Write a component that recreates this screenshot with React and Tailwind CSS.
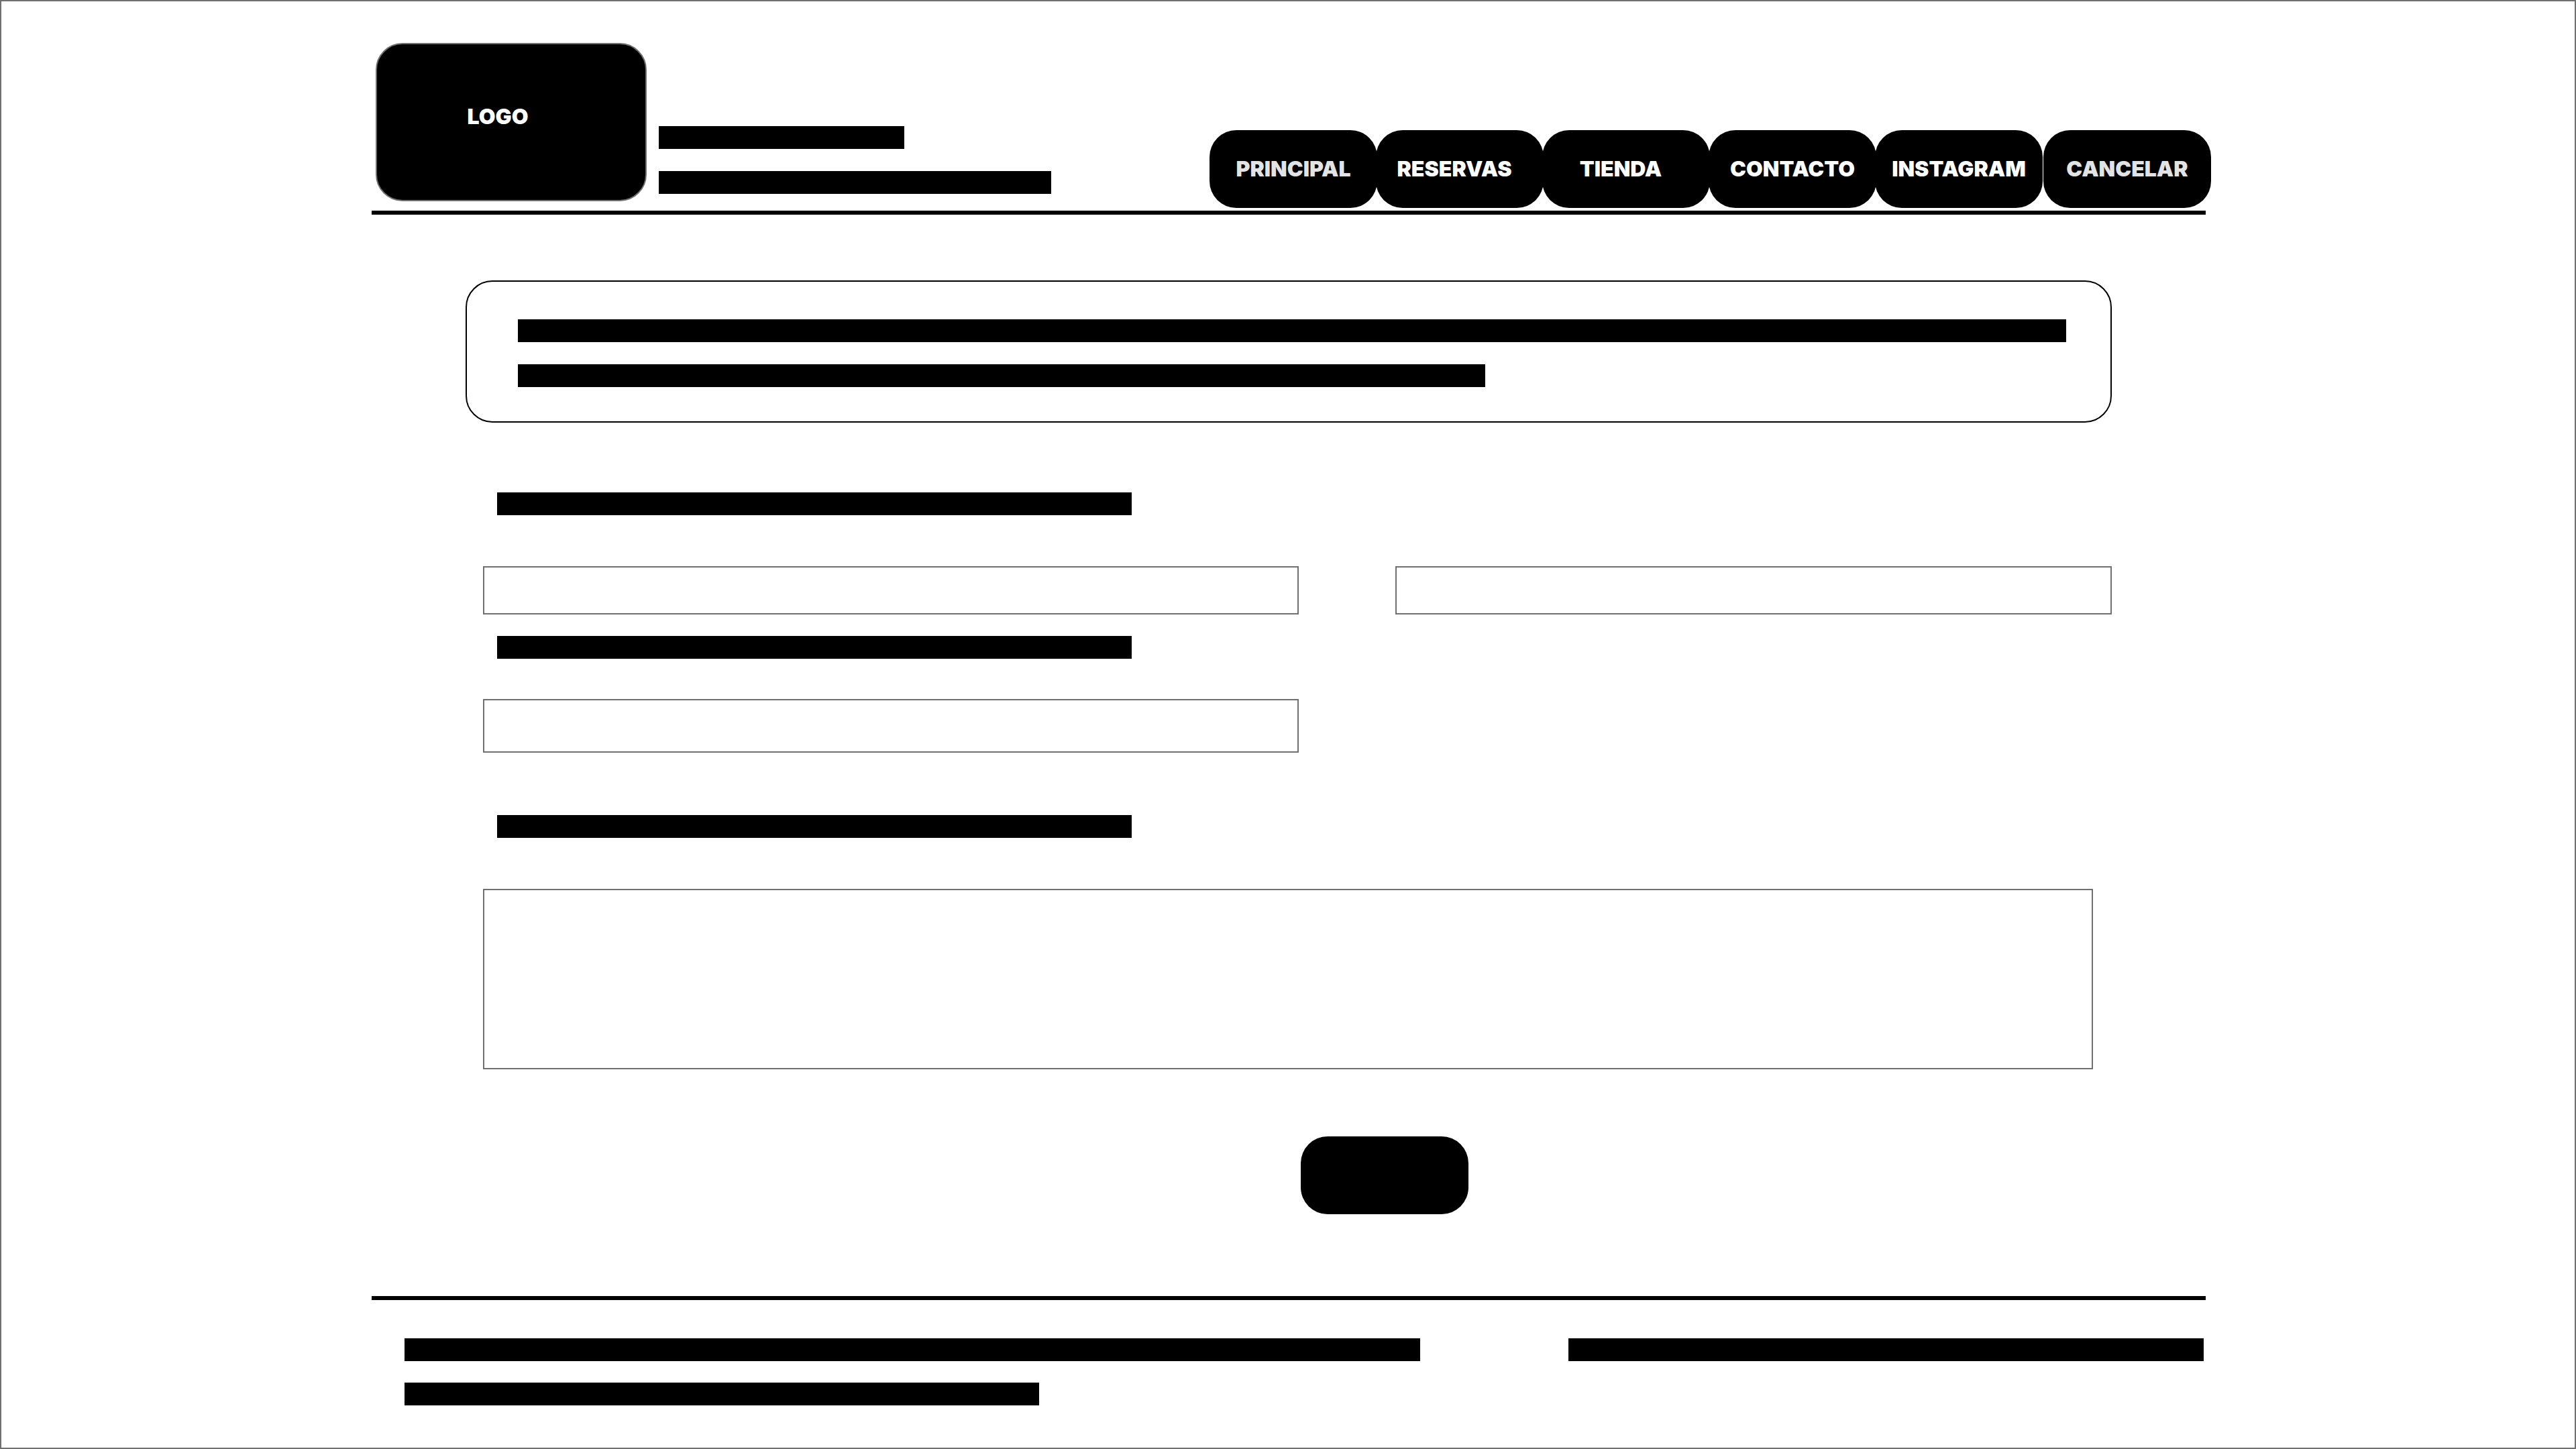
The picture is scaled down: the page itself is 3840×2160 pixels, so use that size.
const links = [
  { text: "PRINCIPAL", look: "text-[#e3e3e3]" },
  { text: "RESERVAS", look: "text-white pr-4 -ml-[2px]" },
  { text: "TIENDA", look: "text-white pr-4 -ml-[2px]" },
  { text: "CONTACTO", look: "text-white -ml-[2px]" },
  { text: "INSTAGRAM", look: "text-white -ml-[2px]" },
  { text: "CANCELAR", look: "text-[#e3e3e3] ml-[1px]" },
];

// A solid block that stands for a line of copy.
function Bar({ className }) {
  return <div className={`h-[34px] max-w-full bg-black ${className}`} />;
}

// A solid block that labels a form field.
function FieldBar({ htmlFor, name, className }) {
  return (
    <label
      htmlFor={htmlFor}
      aria-label={name}
      className={`ml-[21px] block h-[34px] w-[946px] max-w-full bg-black ${className}`}
    />
  );
}

const field = "block w-full border-2 border-[#707070] bg-white px-4 text-[32px] outline-none";

export default function App() {
  return (
    <div className="min-h-screen border-2 border-[#707070] bg-white pt-[62px] pl-[2px] font-['Inter',sans-serif]">
      <div className="mx-auto w-full max-w-[2734px]">
        <header className="flex items-end border-b-[6px] border-black pl-[6px]">
          <a
            href="#inicio"
            className="mb-[14px] flex h-[236px] w-[404px] shrink-0 items-center justify-center rounded-[40px] border-2 border-[#707070] bg-black pr-10 pb-4 text-[32px] font-black text-white"
          >
            LOGO
          </a>
          <div className="mb-[25px] ml-[18px] flex flex-col gap-[33px]">
            <Bar className="w-[366px]" />
            <Bar className="w-[585px]" />
          </div>
          <nav className="mb-1 -mr-[8px] ml-auto flex">
            {links.map((l) => (
              <a
                key={l.text}
                href={`#${l.text.toLowerCase()}`}
                className={`flex h-[116px] w-[250px] items-center justify-center rounded-[40px] bg-black text-[32px] font-black ${l.look}`}
              >
                {l.text}
              </a>
            ))}
          </nav>
        </header>

        <main className="px-[140px] pt-[98px]">
          <section className="flex h-[212px] flex-col gap-[33px] rounded-[40px] border-2 border-black pt-14 pr-[66px] pl-[76px]">
            <Bar className="w-full" />
            <Bar className="w-[1442px]" />
          </section>

          <form className="pt-[104px] pl-[26px]">
            <FieldBar htmlFor="nombre" name="Nombre" className="mb-[76px]" />
            <div className="grid grid-cols-[1216fr_1068fr] gap-[144px]">
              <input id="nombre" type="text" className={`${field} h-[72px]`} />
              <input id="apellido" type="text" aria-label="Apellido" className={`${field} h-[72px]`} />
            </div>
            <FieldBar htmlFor="correo" name="Correo" className="mt-8 mb-[60px]" />
            <div className="grid grid-cols-[1216fr_1068fr] gap-[144px]">
              <input id="correo" type="email" className={`${field} h-[80px]`} />
            </div>
            <FieldBar htmlFor="mensaje" name="Mensaje" className="mt-[93px] mb-[76px]" />
            <div className="pr-7">
              <textarea id="mensaje" className={`${field} h-[269px] resize-none`} />
            </div>
            <div className="mt-[100px] grid grid-cols-[1218fr_1209fr]">
              <button
                type="submit"
                aria-label="Enviar"
                className="col-start-2 h-[116px] w-[250px] rounded-[40px] bg-black"
              />
            </div>
          </form>
        </main>

        <footer className="mt-[122px] flex items-start justify-between gap-16 border-t-[6px] border-black pt-[57px] pr-[3px] pl-[49px]">
          <div className="flex flex-col gap-8">
            <Bar className="w-[1514px]" />
            <Bar className="w-[946px]" />
          </div>
          <Bar className="w-[947px]" />
        </footer>
      </div>
    </div>
  );
}
